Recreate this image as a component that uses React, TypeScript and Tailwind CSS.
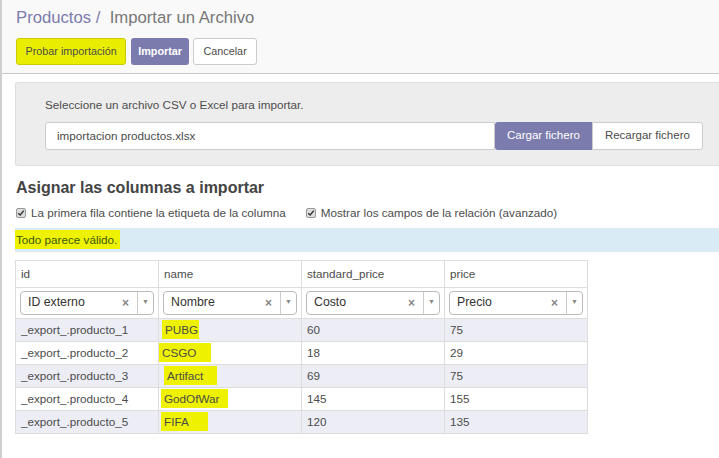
import React from "react";

const rows = [
  { id: "_export_.producto_1", name: "PUBG", cost: "60", price: "75", hl: "w-[37px] ml-[1px]" },
  { id: "_export_.producto_2", name: "CSGO", cost: "18", price: "29", hl: "w-[52px] -ml-[2px]" },
  { id: "_export_.producto_3", name: "Artifact", cost: "69", price: "75", hl: "w-[53px] ml-[3px]" },
  { id: "_export_.producto_4", name: "GodOfWar", cost: "145", price: "155", hl: "w-[67px]" },
  { id: "_export_.producto_5", name: "FIFA", cost: "120", price: "135", hl: "w-[47px]" },
];

const columns = [
  { field: "id", label: "ID externo" },
  { field: "name", label: "Nombre" },
  { field: "standard_price", label: "Costo" },
  { field: "price", label: "Precio" },
];

function FakeSelect({ label }: { label: string }) {
  return (
    <div className="flex h-[24px] items-stretch rounded-[4px] border border-[#bbb] bg-white">
      <div className="flex flex-1 items-center justify-between pl-[7px] pr-[8px]">
        <span className="text-[12.3px] text-[#333]">{label}</span>
        <span className="text-[12px] font-bold leading-none text-[#888]">×</span>
      </div>
      <div className="flex w-[16px] items-center justify-center border-l border-[#ccc]">
        <span className="text-[7px] text-[#888]">▼</span>
      </div>
    </div>
  );
}

function Check({ label }: { label: string }) {
  return (
    <label className="flex items-center gap-[5px]">
      <span className="flex h-[10px] w-[10px] items-center justify-center rounded-[2px] border border-[#999] bg-[#ddd]">
        <svg viewBox="0 0 10 10" className="h-[8px] w-[8px]">
          <path d="M1.5 5.2 L4 7.5 L8.5 2" fill="none" stroke="#333" strokeWidth="1.8" />
        </svg>
      </span>
      <span>{label}</span>
    </label>
  );
}

export default function App() {
  return (
    <div className="h-[458px] w-[719px] overflow-hidden border-l-2 border-[#cfcfcf] bg-white font-['Liberation_Sans',Arial,sans-serif] text-[11.7px] text-[#4c4c4c]">
      {/* Control panel */}
      <div className="h-[74px] border-b border-[#c8c8c8] bg-[#f9f9f9] pl-[14px] pt-[7px]">
        <div className="text-[16.7px] leading-[22px]">
          <span className="text-[#7c7bad]">Productos /&nbsp; </span>
          <span className="text-[#777]">Importar un Archivo</span>
        </div>
        <div className="mt-[9px] flex items-center">
          <button className="h-[27px] rounded-[3px] border border-[#c9cc00] bg-[#e9ee00] px-[8.5px] text-[10.8px] text-[#4c4c4c]">
            Probar importación
          </button>
          <button className="ml-[5px] h-[27px] rounded-[3px] bg-[#7c7bad] px-[7px] text-[10.8px] font-bold text-white">
            Importar
          </button>
          <button className="ml-[4px] h-[27px] rounded-[3px] border border-[#ccc] bg-white px-[9.5px] text-[10.8px] text-[#4c4c4c]">
            Cancelar
          </button>
        </div>
      </div>

      {/* File chooser */}
      <div className="ml-[13px] mt-[8px] h-[84px] rounded-l-[3px] border border-r-0 border-[#ddd] bg-[#eeeded] pl-[29px] pt-[14px]">
        <p className="leading-[16px]">Seleccione un archivo CSV o Excel para importar.</p>
        <div className="mt-[9px] flex h-[28px] items-stretch">
          <div className="flex w-[450px] items-center rounded-l-[3px] border border-[#ccc] bg-white pl-[11px]">
            importacion productos.xlsx
          </div>
          <button className="rounded-l-[3px] bg-[#7c7bad] px-[12px] text-[11.5px] text-white">Cargar fichero</button>
          <button className="rounded-r-[3px] border border-[#ccc] bg-white px-[12px] text-[11.5px] text-[#4c4c4c]">
            Recargar fichero
          </button>
        </div>
      </div>

      {/* Mapping */}
      <h2 className="ml-[14px] mt-[11px] text-[16px] font-bold leading-[22px] text-[#444]">
        Asignar las columnas a importar
      </h2>
      <div className="ml-[14px] mt-[5px] flex gap-[20px]">
        <Check label="La primera fila contiene la etiqueta de la columna" />
        <Check label="Mostrar los campos de la relación (avanzado)" />
      </div>
      <div className="ml-[13px] mt-[6px] flex h-[24px] items-center bg-[#d9ebf5]">
        <span className="flex h-[19px] items-center bg-[#eef200] pl-[1px] pr-[3px] text-[#3c5a14]">
          Todo parece válido.
        </span>
      </div>

      <table className="ml-[13px] mt-[8px] w-[573px] table-fixed border-collapse">
        <thead>
          <tr className="h-[27px]">
            {columns.map((c) => (
              <th key={c.field} className="border border-[#ddd] px-[5px] text-left font-normal text-[#4c4c4c]">
                {c.field}
              </th>
            ))}
          </tr>
          <tr className="h-[31px]">
            {columns.map((c) => (
              <th key={c.field} className="border border-[#ddd] px-[4px] font-normal">
                <FakeSelect label={c.label} />
              </th>
            ))}
          </tr>
        </thead>
        <tbody>
          {rows.map((r, i) => (
            <tr key={r.id} className={`h-[23px] ${i % 2 === 0 ? "bg-[#ecedf5]" : "bg-white"}`}>
              <td className="border border-[#ddd] px-[5px]">{r.id}</td>
              <td className="border border-[#ddd] px-[2px]">
                <span className={`inline-block ${r.hl} bg-[#eef200] pl-[3px] leading-[19px]`}>{r.name}</span>
              </td>
              <td className="border border-[#ddd] px-[5px]">{r.cost}</td>
              <td className="border border-[#ddd] px-[5px]">{r.price}</td>
            </tr>
          ))}
        </tbody>
      </table>
    </div>
  );
}
